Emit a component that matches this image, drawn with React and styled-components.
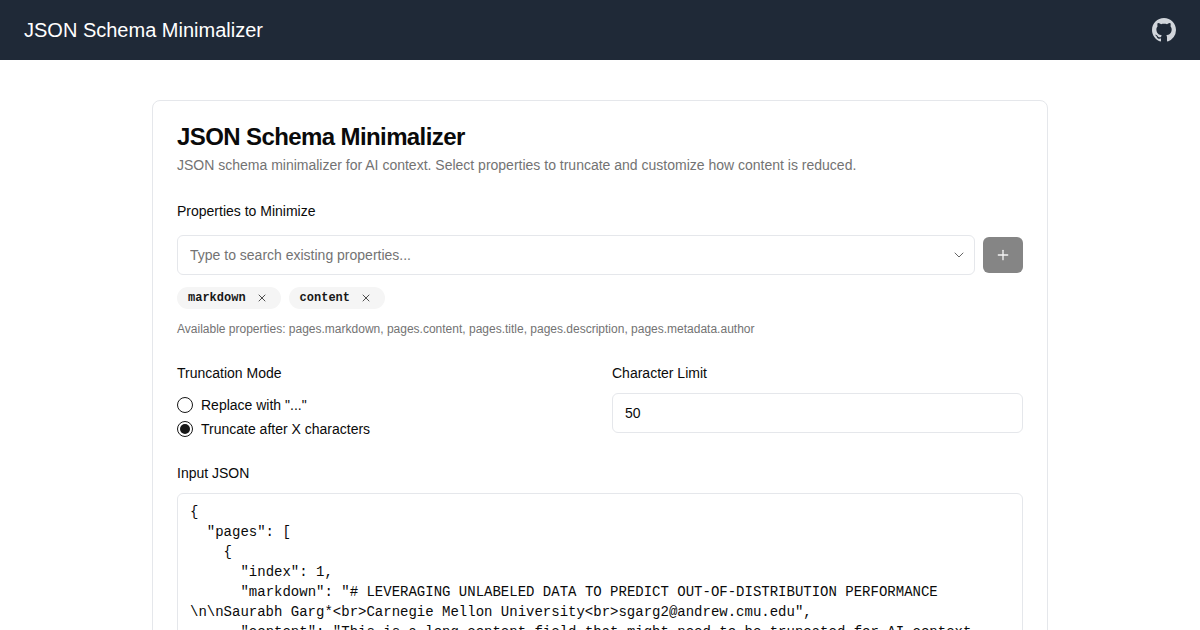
import React from "react";
import styled, { createGlobalStyle } from "styled-components";
import { ChevronDown, Plus, X } from "lucide-react";

const sampleJson = `{
  "pages": [
    {
      "index": 1,
      "markdown": "# LEVERAGING UNLABELED DATA TO PREDICT OUT-OF-DISTRIBUTION PERFORMANCE \\n\\nSaurabh Garg*<br>Carnegie Mellon University<br>sgarg2@andrew.cmu.edu",
      "content": "This is a long content field that might need to be truncated for AI context. Additional text follows",
      "title": "Leveraging Unlabeled Data",
      "description": "A paper about predicting performance",
      "metadata": {
        "author": "Saurabh Garg"
      }
    }
  ]
}`;

const App = () => {
  return (
    <>
      <GlobalStyle />
      <Header>
        <HeaderTitle>JSON Schema Minimalizer</HeaderTitle>
        <GithubLink href="#" aria-label="GitHub">
          <svg viewBox="0 0 16 16" width="24" height="24" fill="currentColor">
            <path d="M8 0C3.58 0 0 3.58 0 8c0 3.54 2.29 6.53 5.47 7.59.4.07.55-.17.55-.38 0-.19-.01-.82-.01-1.49-2.01.37-2.53-.49-2.69-.94-.09-.23-.48-.94-.82-1.13-.28-.15-.68-.52-.01-.53.63-.01 1.08.58 1.23.82.72 1.21 1.87.87 2.33.66.07-.52.28-.87.51-1.07-1.78-.2-3.64-.89-3.64-3.95 0-.87.31-1.59.82-2.15-.08-.2-.36-1.02.08-2.12 0 0 .67-.21 2.2.82.64-.18 1.32-.27 2-.27.68 0 1.36.09 2 .27 1.53-1.04 2.2-.82 2.2-.82.44 1.1.16 1.92.08 2.12.51.56.82 1.27.82 2.15 0 3.07-1.87 3.75-3.65 3.95.29.25.54.73.54 1.48 0 1.07-.01 1.93-.01 2.2 0 .21.15.46.55.38A8.013 8.013 0 0016 8c0-4.42-3.58-8-8-8z" />
          </svg>
        </GithubLink>
      </Header>
      <Main>
        <Card>
          <Title>JSON Schema Minimalizer</Title>
          <Description>
            JSON schema minimalizer for AI context. Select properties to truncate and customize how
            content is reduced.
          </Description>

          <Section>
            <Label>Properties to Minimize</Label>
            <SearchRow>
              <SearchBox>
                <SearchInput placeholder="Type to search existing properties..." />
                <ChevronDown size={16} strokeWidth={1.5} />
              </SearchBox>
              <AddButton aria-label="Add property" disabled>
                <Plus size={16} strokeWidth={2} />
              </AddButton>
            </SearchRow>
            <Chips>
              {["markdown", "content"].map((name) => (
                <Chip key={name}>
                  <ChipName>{name}</ChipName>
                  <X size={12} strokeWidth={1.5} />
                </Chip>
              ))}
            </Chips>
            <Hint>
              Available properties: pages.markdown, pages.content, pages.title, pages.description,
              pages.metadata.author
            </Hint>
          </Section>

          <OptionsGrid>
            <div>
              <Label>Truncation Mode</Label>
              <RadioGroup>
                <RadioRow>
                  <RadioDot />
                  Replace with "..."
                </RadioRow>
                <RadioRow>
                  <RadioDot $checked />
                  Truncate after X characters
                </RadioRow>
              </RadioGroup>
            </div>
            <div>
              <Label>Character Limit</Label>
              <LimitInput defaultValue="50" />
            </div>
          </OptionsGrid>

          <JsonSection>
            <Label>Input JSON</Label>
            <JsonInput defaultValue={sampleJson} spellCheck={false} />
          </JsonSection>
        </Card>
      </Main>
    </>
  );
};

export default App;

const GlobalStyle = createGlobalStyle`
  * {
    box-sizing: border-box;
  }

  html,
  body {
    margin: 0;
    height: 630px;
    overflow: hidden;
    background: #fff;
    color: #0a0a0a;
    font-family: "Liberation Sans", Arial, sans-serif;
  }
`;

const Header = styled.header`
  height: 60px;
  padding: 0 24px;
  display: flex;
  align-items: center;
  justify-content: space-between;
  background: #1f2937;
`;

const HeaderTitle = styled.div`
  font-size: 20px;
  line-height: 28px;
  color: #fff;
`;

const GithubLink = styled.a`
  display: flex;
  color: #d1d5db;
`;

const Main = styled.main`
  width: 896px;
  margin: 0 auto;
  padding-top: 40px;
`;

const Card = styled.section`
  padding: 24px;
  border: 1px solid #e5e7eb;
  border-radius: 8px;
  background: #fff;
`;

const Title = styled.h1`
  margin: 0;
  font-size: 24px;
  line-height: 24px;
  font-weight: 700;
  letter-spacing: -0.6px;
`;

const Description = styled.p`
  margin: 6px 0 0;
  font-size: 14px;
  line-height: 20px;
  color: #737373;
`;

const Section = styled.div`
  margin-top: 26px;
`;

const Label = styled.div`
  font-size: 14px;
  line-height: 20px;
  color: #0a0a0a;
`;

const SearchRow = styled.div`
  margin-top: 14px;
  display: flex;
  align-items: center;
  gap: 8px;
`;

const SearchBox = styled.div`
  flex: 1;
  height: 40px;
  padding: 0 7px 0 12px;
  display: flex;
  align-items: center;
  border: 1px solid #e5e7eb;
  border-radius: 6px;
  color: #666;
`;

const SearchInput = styled.input`
  flex: 1;
  min-width: 0;
  padding: 0;
  border: 0;
  outline: 0;
  background: transparent;
  font: 14px "Liberation Sans", Arial, sans-serif;

  &::placeholder {
    color: #737373;
    opacity: 1;
  }
`;

const AddButton = styled.button`
  width: 40px;
  height: 36px;
  padding: 0;
  display: flex;
  align-items: center;
  justify-content: center;
  border: 0;
  border-radius: 6px;
  background: #858585;
  color: #f5f5f5;
`;

const Chips = styled.div`
  margin-top: 12px;
  display: flex;
  gap: 8px;
`;

const Chip = styled.span`
  height: 22px;
  padding: 0 13px 0 11px;
  display: inline-flex;
  align-items: center;
  gap: 10px;
  border-radius: 11px;
  background: #f5f5f5;
  color: #171717;
`;

const ChipName = styled.span`
  font: 700 12px "Liberation Mono", monospace;
`;

const Hint = styled.p`
  margin: 12px 0 0;
  font-size: 12px;
  line-height: 16px;
  color: #737373;
`;

const OptionsGrid = styled.div`
  margin-top: 26px;
  display: grid;
  grid-template-columns: 1fr 1fr;
  gap: 24px;
`;

const RadioGroup = styled.div`
  margin-top: 12px;
  display: flex;
  flex-direction: column;
  gap: 4px;
`;

const RadioRow = styled.label`
  height: 20px;
  display: flex;
  align-items: center;
  gap: 8px;
  font-size: 14px;
`;

const RadioDot = styled.span`
  width: 16px;
  height: 16px;
  display: flex;
  align-items: center;
  justify-content: center;
  border: 1px solid #171717;
  border-radius: 50%;

  &::after {
    content: "";
    width: 10px;
    height: 10px;
    border-radius: 50%;
    background: ${({ $checked }) => ($checked ? "#171717" : "transparent")};
  }
`;

const LimitInput = styled.input`
  display: block;
  width: 100%;
  height: 40px;
  margin-top: 10px;
  padding: 0 12px;
  border: 1px solid #e5e7eb;
  border-radius: 6px;
  outline: 0;
  color: #0a0a0a;
  font: 14px "Liberation Sans", Arial, sans-serif;
`;

const JsonSection = styled.div`
  margin-top: 24px;
`;

const JsonInput = styled.textarea`
  display: block;
  width: 100%;
  height: 400px;
  margin-top: 10px;
  padding: 8px 12px;
  border: 1px solid #e5e7eb;
  border-radius: 6px;
  outline: 0;
  resize: none;
  overflow: hidden;
  color: #0a0a0a;
  font: 14px/20px "Liberation Mono", monospace;
`;
